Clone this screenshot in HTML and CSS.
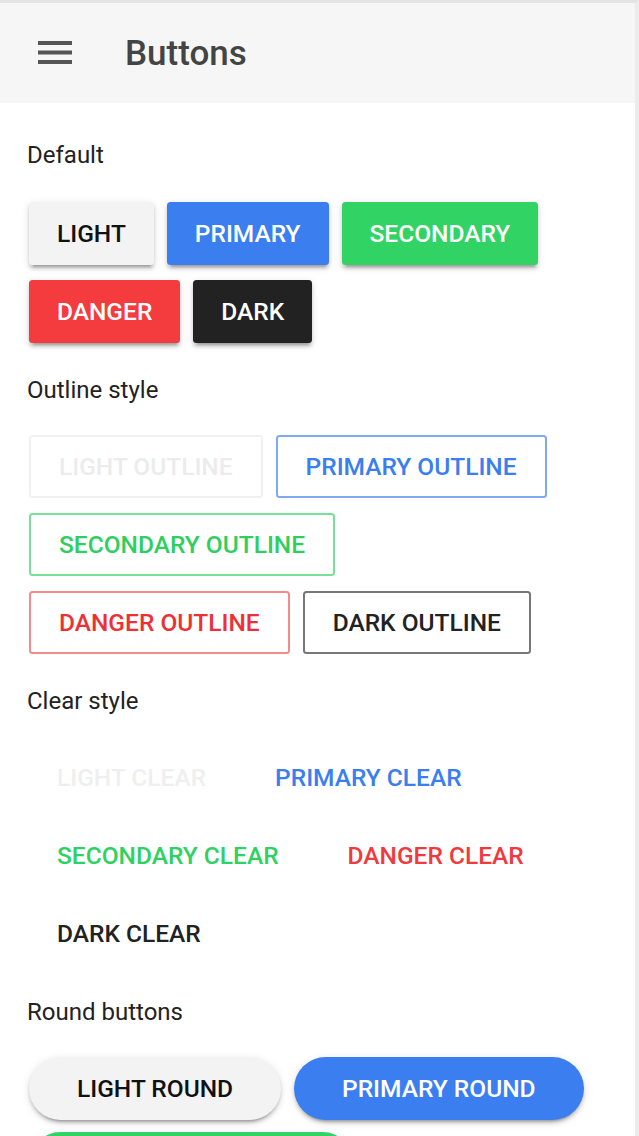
FILE: index.html
```html
<!DOCTYPE html>
<html lang="en">
<head>
<meta charset="utf-8">
<title>Buttons</title>
<link rel="stylesheet" href="styles.css">
</head>
<body>
<div class="frame">
  <header class="toolbar">
    <button class="menu-btn" aria-label="Menu">
      <svg width="34" height="24" viewBox="0 0 34 24">
        <rect x="0" y="0" width="34" height="4" fill="#555"/>
        <rect x="0" y="9.5" width="34" height="4" fill="#555"/>
        <rect x="0" y="19" width="34" height="4" fill="#555"/>
      </svg>
    </button>
    <h1 class="title">Buttons</h1>
  </header>
  <main class="content">
    <p class="label first">Default</p>
    <div class="row">
      <button class="btn solid light">Light</button>
      <button class="btn solid primary">Primary</button>
      <button class="btn solid secondary">Secondary</button>
      <button class="btn solid danger">Danger</button>
      <button class="btn solid dark">Dark</button>
    </div>

    <p class="label">Outline style</p>
    <div class="row">
      <button class="btn outline light">Light outline</button>
      <button class="btn outline primary">Primary outline</button>
      <button class="btn outline secondary">Secondary outline</button>
      <button class="btn outline danger">Danger outline</button>
      <button class="btn outline dark">Dark outline</button>
    </div>

    <p class="label">Clear style</p>
    <div class="row">
      <button class="btn clear light">Light clear</button>
      <button class="btn clear primary">Primary clear</button>
      <button class="btn clear secondary">Secondary clear</button>
      <button class="btn clear danger">Danger clear</button>
      <button class="btn clear dark">Dark clear</button>
    </div>

    <p class="label">Round buttons</p>
    <div class="row rounds">
      <button class="btn solid round light">Light round</button>
      <button class="btn solid round primary">Primary round</button>
      <button class="btn solid round secondary">Secondary round</button>
      <button class="btn solid round danger">Danger round</button>
      <button class="btn solid round dark">Dark round</button>
    </div>
  </main>
</div>
</body>
</html>
```

FILE: styles.css
```css
html, body {
  margin: 0;
  padding: 0;
  background: #ffffff;
}

body {
  font-family: Roboto, "Noto Sans", "Liberation Sans", sans-serif;
  color: #222;
}

.frame {
  border-top: 3px solid #e4e4e4;
  border-right: 4px solid #ececec;
  min-height: 1133px;
  box-sizing: border-box;
}

.toolbar {
  height: 100px;
  background: #f6f6f6;
  display: flex;
  align-items: center;
}

.menu-btn {
  border: 0;
  background: transparent;
  padding: 0;
  margin: 0 0 0 38px;
  width: 34px;
  height: 24px;
  display: flex;
}

.title {
  margin: 0 0 0 53px;
  font-size: 35px;
  font-weight: 500;
  color: #444;
  letter-spacing: 0;
}

.content {
  padding: 0 28px 0 27px;
}

.label {
  margin: 33px 0 31px;
  font-size: 24px;
  line-height: 28px;
  font-weight: 400;
  color: #222;
}

.label.first {
  margin: 38px 0 33px;
}

.row {
  display: flex;
  flex-wrap: wrap;
  column-gap: 13px;
  row-gap: 15px;
  padding-left: 2px;
}

.row.rounds {
  row-gap: 12px;
}

.btn {
  height: 63px;
  box-sizing: border-box;
  padding: 0 28px;
  font-family: Roboto, "Noto Sans", "Liberation Sans", sans-serif;
  font-size: 24.5px;
  font-weight: 500;
  text-transform: uppercase;
  border: 0;
  border-radius: 3.5px;
  background: transparent;
  white-space: nowrap;
  display: inline-flex;
  align-items: center;
  justify-content: center;
}

.solid {
  box-shadow: 0 3.5px 3.5px 0 rgba(0,0,0,.14), 0 5px 2px -3.5px rgba(0,0,0,.2), 0 2px 9px 0 rgba(0,0,0,.12);
}

.solid.light { background: #f3f3f3; color: #111; }
.solid.primary { background: #3a7ef0; color: #fff; }
.solid.secondary { background: #31d464; color: #fff; }
.solid.danger { background: #f43b3d; color: #fff; }
.solid.dark { background: #222; color: #fff; }

.outline {
  border: 2px solid;
}
.outline.light { border-color: #f1f1f1; color: #ececec; }
.outline.primary { border-color: #80a9f3; color: #3a7ef0; }
.outline.secondary { border-color: #79e197; color: #2fcf5f; }
.outline.danger { border-color: #f58a8c; color: #ee3036; }
.outline.dark { border-color: #777; color: #222; }

.clear.light { color: #efefef; }
.clear.primary { color: #3a7ef0; }
.clear.secondary { color: #2fd163; }
.clear.danger { color: #f03a3d; }
.clear.dark { color: #222; }

.round {
  border-radius: 64px;
  padding: 0 48px;
}
```
